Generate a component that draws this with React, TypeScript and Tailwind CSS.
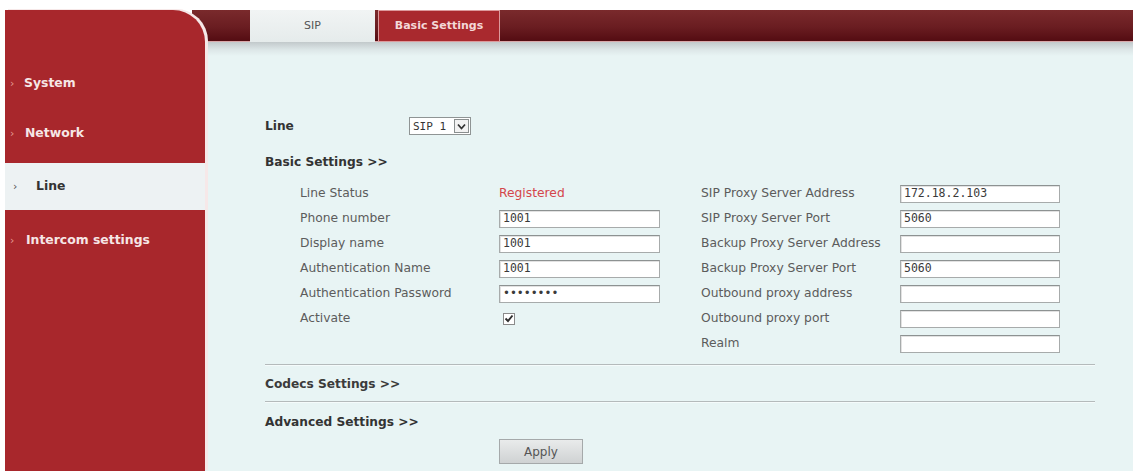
import React from "react";

const font = { fontFamily: '"DejaVu Sans", Verdana, "Liberation Sans", sans-serif' };
const mono = { fontFamily: '"DejaVu Sans Mono", "Liberation Mono", monospace' };

function TextBox({ value, w }: { value?: string; w: string }) {
  return (
    <div
      className={`${w} h-[18px] bg-white border border-[#a7abab] border-t-[#8d9292] shadow-[inset_1px_1px_0_#e2e2e2] flex items-center pl-[3px] text-[11.5px] text-[#3a3a3a] leading-none`}
      style={mono}
    >
      {value}
    </div>
  );
}

function Row({ label, children }: { label: string; children?: React.ReactNode }) {
  return (
    <div className="h-[25px] flex items-center">
      <div className="w-[199px] text-[12.3px] text-[#5c5c5c] leading-none whitespace-nowrap">{label}</div>
      {children}
    </div>
  );
}

function SideItem({ label, active, textPad, arrowPad }: { label: string; active?: boolean; textPad: string; arrowPad: string }) {
  return (
    <div className={`flex items-center ${active ? "h-[47px] bg-[#edf2f3]" : "h-[24px]"}`}>
      <span className={`${arrowPad} w-[12px] text-[11px] leading-none ${active ? "text-[#555]" : "text-[#e59a93]"}`}>›</span>
      <span className={`${textPad} text-[12.4px] font-bold leading-none ${active ? "text-[#333]" : "text-[#f6e6e6]"}`}>{label}</span>
    </div>
  );
}

export default function App() {
  return (
    <div className="w-[1137px] h-[473px] bg-white flex pt-[10px] pl-[5px] pr-[4px] pb-[2px] overflow-hidden" style={font}>
      {/* Sidebar */}
      <aside className="relative z-10 w-[200px] shrink-0 h-full bg-[#a8272c] rounded-tr-[32px] shadow-[3px_-1px_0_0_#f6e8e8] flex flex-col pt-[61px]">
        <SideItem label="System" arrowPad="ml-[5px]" textPad="ml-[2px]" />
        <div className="mt-[26px]">
          <SideItem label="Network" arrowPad="ml-[5px]" textPad="ml-[3px]" />
        </div>
        <div className="mt-[18px]">
          <SideItem label="Line" active arrowPad="ml-[8px]" textPad="ml-[11px]" />
        </div>
        <div className="mt-[18px]">
          <SideItem label="Intercom settings" arrowPad="ml-[5px]" textPad="ml-[4px]" />
        </div>
      </aside>

      {/* Main column */}
      <main className="-ml-[13px] flex-1 flex flex-col">
        {/* Header bar */}
        <div className="h-[32px] shrink-0 bg-[linear-gradient(to_bottom,#7a2a2c_0%,#6a1d21_55%,#540c12_100%)] border-b border-[#d9a9ab] flex pl-[58px]">
          <div className="w-[125px] h-[33px] bg-[linear-gradient(to_bottom,#f1f4f4,#e5ebeb)] flex items-center justify-center text-[11px] text-[#555]">
            SIP
          </div>
          <div className="ml-[3px] w-[122px] h-[32px] bg-[#a9292e] border border-[#dc9a9c] flex items-center justify-center text-[11px] font-bold text-[#f4d8d8]">
            Basic Settings
          </div>
        </div>

        {/* Content */}
        <div className="flex-1 bg-[linear-gradient(to_bottom,#c2c9cb_0px,#dde7e8_8px,#e8f4f4_14px,#e8f4f4_100%)] pl-[73px] pt-[75px]">
          {/* Line selector */}
          <div className="h-[18px] flex items-center">
            <div className="w-[144px] text-[12.2px] font-bold text-[#333] leading-none">Line</div>
            <div className="w-[62px] h-[18px] bg-white border border-[#8f9494] flex items-center">
              <span className="flex-1 pl-[3px] text-[11px] text-[#333] leading-none" style={mono}>SIP 1</span>
              <div className="w-[15px] h-[14px] mr-[1px] border border-[#8a8f8f] bg-[#f2f2f2] flex items-center justify-center">
                <svg width="9" height="7" viewBox="0 0 9 7">
                  <path d="M1 1.5 L4.5 5.5 L8 1.5" fill="none" stroke="#333" strokeWidth="1.8" />
                </svg>
              </div>
            </div>
          </div>

          {/* Basic Settings heading */}
          <div className="mt-[18px] h-[18px] flex items-center text-[12.2px] font-bold text-[#333] leading-none">
            Basic Settings &gt;&gt;
          </div>

          {/* Two columns */}
          <div className="mt-[10px] flex">
            <div className="pl-[35px] w-[436px] shrink-0">
              <Row label="Line Status">
                <span className="text-[12.3px] text-[#d4464b] leading-none">Registered</span>
              </Row>
              <Row label="Phone number">
                <TextBox value="1001" w="w-[161px]" />
              </Row>
              <Row label="Display name">
                <TextBox value="1001" w="w-[161px]" />
              </Row>
              <Row label="Authentication Name">
                <TextBox value="1001" w="w-[161px]" />
              </Row>
              <Row label="Authentication Password">
                <TextBox value="••••••••" w="w-[161px]" />
              </Row>
              <Row label="Activate">
                <div className="ml-[4px] w-[12px] h-[12px] bg-white border border-[#8b8b8b] flex items-center justify-center">
                  <svg width="10" height="9" viewBox="0 0 10 9">
                    <path d="M1.5 4.5 L4 7 L8.5 1.5" fill="none" stroke="#2f2f2f" strokeWidth="1.9" />
                  </svg>
                </div>
              </Row>
            </div>
            <div>
              <Row label="SIP Proxy Server Address">
                <TextBox value="172.18.2.103" w="w-[160px]" />
              </Row>
              <Row label="SIP Proxy Server Port">
                <TextBox value="5060" w="w-[160px]" />
              </Row>
              <Row label="Backup Proxy Server Address">
                <TextBox w="w-[160px]" />
              </Row>
              <Row label="Backup Proxy Server Port">
                <TextBox value="5060" w="w-[160px]" />
              </Row>
              <Row label="Outbound proxy address">
                <TextBox w="w-[160px]" />
              </Row>
              <Row label="Outbound proxy port">
                <TextBox w="w-[160px]" />
              </Row>
              <Row label="Realm">
                <TextBox w="w-[160px]" />
              </Row>
            </div>
          </div>

          <div className="mt-[8px] w-[830px] border-t border-[#b4babb] border-b border-b-[#f5fbfb]" />
          <div className="mt-[9px] h-[18px] flex items-center text-[12.2px] font-bold text-[#3b3b3b] leading-none">
            Codecs Settings &gt;&gt;
          </div>
          <div className="mt-[8px] w-[830px] border-t border-[#b4babb] border-b border-b-[#f5fbfb]" />
          <div className="mt-[10px] h-[18px] flex items-center text-[12.2px] font-bold text-[#333] leading-none">
            Advanced Settings &gt;&gt;
          </div>
          <div className="mt-[8px] ml-[234px] w-[84px] h-[25px] border border-[#a5a9aa] bg-[linear-gradient(to_bottom,#e9ebeb,#cfd2d3)] flex items-center justify-center text-[12px] text-[#555] leading-none">
            Apply
          </div>
        </div>
      </main>
    </div>
  );
}
